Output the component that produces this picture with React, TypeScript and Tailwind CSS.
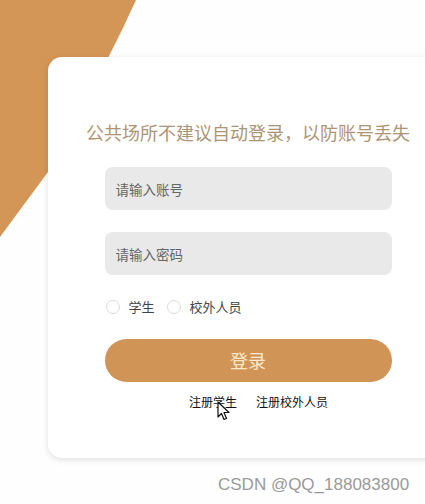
import { useState } from "react";

const cjk = { fontFamily: '"Noto Sans CJK SC", "Noto Sans", sans-serif' };

function Radio({ label, checked, onClick }: { label: string; checked: boolean; onClick: () => void }) {
  return (
    <button type="button" onClick={onClick} className="flex items-center gap-[9px]">
      <span className="flex h-[14px] w-[14px] items-center justify-center rounded-full border border-[#dcdcdc] bg-white">
        {checked && <span className="h-[6px] w-[6px] rounded-full bg-[#d09456]" />}
      </span>
      <span className="text-[13px] leading-5 text-[#444]">{label}</span>
    </button>
  );
}

export default function App() {
  const [role, setRole] = useState<"student" | "outside" | null>(null);

  return (
    <div className="relative h-[504px] w-[425px] overflow-hidden bg-[#fefefe]" style={cjk}>
      {/* orange decoration behind the card */}
      <svg className="absolute left-0 top-0" width="160" height="260" viewBox="0 0 160 260">
        <polygon points="0,0 136,0 122,30 108,58 78,115 48,172 0,237" fill="#d39656" />
      </svg>

      <div className="relative ml-[48px] mt-[57px] flex w-[400px] flex-col items-center rounded-[14px] bg-white pb-[47px] pt-[63px] shadow-[0_2px_6px_rgba(0,0,0,0.12)]">
        <h1 className="text-[18px] font-normal leading-6 text-[#ad9475]">公共场所不建议自动登录，以防账号丢失</h1>

        <input
          className="mt-[23px] h-[43px] w-[287px] rounded-[8px] bg-[#e9e9e9] px-[11px] text-[13.5px] text-[#444] outline-none placeholder:text-[#666]"
          placeholder="请输入账号"
        />
        <input
          type="password"
          className="mt-[22px] h-[43px] w-[287px] rounded-[8px] bg-[#e9e9e9] px-[11px] text-[13.5px] text-[#444] outline-none placeholder:text-[#666]"
          placeholder="请输入密码"
        />

        <div className="mt-[22px] flex w-[287px] items-center gap-[12px] pl-[1px]">
          <Radio label="学生" checked={role === "student"} onClick={() => setRole("student")} />
          <Radio label="校外人员" checked={role === "outside"} onClick={() => setRole("outside")} />
        </div>

        <button
          type="button"
          className="mt-[22px] h-[43px] w-[287px] rounded-full bg-[#d09456] text-[18px] text-[#fde9c8]"
        >
          登录
        </button>

        <div className="ml-[21px] mt-[11px] flex gap-[19px] text-[12px] leading-[18px] text-[#111]">
          <a href="#">注册学生</a>
          <a href="#">注册校外人员</a>
        </div>
      </div>

      {/* mouse pointer captured in the screenshot */}
      <svg className="absolute left-[217px] top-[401px]" width="14" height="20" viewBox="0 0 14 20">
        <path d="M1 1 L1 16 L4.5 12.5 L7 18.5 L9.5 17.5 L7 11.5 L12 11.5 Z" fill="#fff" stroke="#111" strokeWidth="1.2" strokeLinejoin="round" />
      </svg>

      <div className="absolute left-[218px] top-[475px] text-[17px] leading-5 text-[#9a9a9a]" style={{ fontFamily: '"Liberation Sans", Arial, sans-serif' }}>
        CSDN @QQ_188083800
      </div>
    </div>
  );
}
